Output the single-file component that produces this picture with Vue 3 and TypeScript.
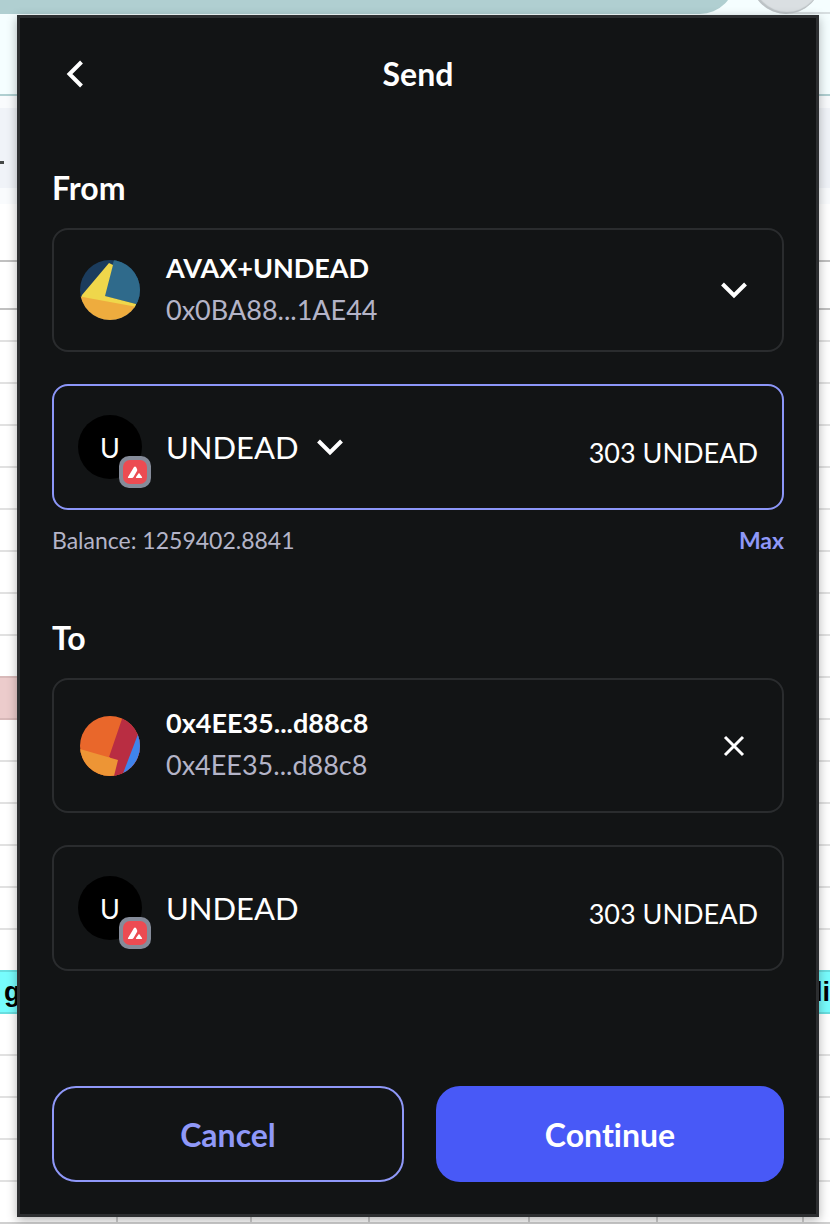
<script setup lang="ts">
import { ref } from 'vue'

interface SheetRow {
  id: number
  tone: 'plain' | 'pink' | 'cyan'
  left?: string
  right?: string
}

const rows: SheetRow[] = Array.from({ length: 21 }, (_, id) => {
  if (id === 8) return { id, tone: 'pink' }
  if (id === 15) return { id, tone: 'cyan', left: 'g', right: 'di' }
  return { id, tone: 'plain' }
})
const columns = ['a', 'b', 'c', 'd', 'e', 'f']

const account = { name: 'AVAX+UNDEAD', address: '0x0BA88...1AE44' }
const recipient = { name: '0x4EE35...d88c8', address: '0x4EE35...d88c8' }
const token = 'UNDEAD'
const balance = '1259402.8841'
const amount = ref('303 UNDEAD')

function useMax() {
  amount.value = `${balance} ${token}`
}
</script>

<template>
  <div class="screen">
    <div class="backdrop" aria-hidden="true">
      <div class="browser-bar">
        <div class="search-pill"></div>
        <div class="profile"></div>
      </div>
      <div class="toolbar"><div class="toolbar-band"><span class="dash"></span></div></div>
      <div class="formula"></div>
      <div class="heading-row"></div>
      <div class="first-row"></div>
      <div v-for="row in rows" :key="row.id" class="row" :class="row.tone">
        <span>{{ row.left }}</span><span>{{ row.right }}</span>
      </div>
      <div class="column-row"><span v-for="c in columns" :key="c" :class="'col-' + c"></span></div>
    </div>

    <main class="popup">
      <header class="header">
        <button class="icon-button back" type="button" aria-label="Back">
          <svg width="20" height="30" viewBox="0 0 20 30"><path d="M15.500 3 3.500 15 15.500 27" /></svg>
        </button>
        <h1>Send</h1>
      </header>

      <section class="from">
        <h2>From</h2>
        <button class="card account" type="button" aria-haspopup="listbox">
          <span class="slot">
            <svg width="60" height="60" viewBox="0 0 60 60" aria-hidden="true">
              <clipPath id="from-clip"><circle cx="30" cy="30" r="30" /></clipPath>
              <g clip-path="url(#from-clip)">
                <path fill="#1b3c5d" d="M0 0h60v60H0z" />
                <path fill="#2f6a8b" d="M34 0h26v46l-4-2-32-8z" />
                <path fill="#efd74b" d="M29 3 33 5 25 36 56 44V48L1 38 2 35z" />
                <path fill="#eeac3e" d="M0 36.500 60 47.500V60H0z" />
              </g>
            </svg>
          </span>
          <span class="names"><strong>{{ account.name }}</strong><span>{{ account.address }}</span></span>
          <svg class="end-icon" width="28" height="18" viewBox="0 0 28 18"><path d="M2.500 3 14 14.500 25.500 3" /></svg>
        </button>

        <div class="card token active">
          <span class="coin">U
            <svg class="badge" width="32" height="32" viewBox="0 0 32 32" aria-hidden="true">
              <rect width="32" height="32" rx="10" fill="#858b99" />
              <rect x="4" y="4" width="24" height="24" rx="7" fill="#ec4b52" />
              <path fill="#fff" d="M15 11q1-1 2 0l1 2q.5 1 0 2l-3.500 6q-.5 1-1.500 1H9.500q-1 0-.5-1zM19.500 17.500q.5-1 1 0l2.500 3.500q.5 1-.5 1h-5q-1 0-.5-1z" />
            </svg>
          </span>
          <button class="token-picker" type="button" aria-haspopup="listbox">
            {{ token }}
            <svg width="28" height="18" viewBox="0 0 28 18" aria-hidden="true"><path d="M2.500 3 14 14.500 25.500 3" /></svg>
          </button>
          <input v-model="amount" class="amount" type="text" aria-label="Amount to send" />
        </div>

        <div class="balance">
          <span>Balance: {{ balance }}</span>
          <button type="button" @click="useMax">Max</button>
        </div>
      </section>

      <section class="to">
        <h2>To</h2>
        <div class="card recipient">
          <span class="slot">
            <svg width="60" height="60" viewBox="0 0 60 60" aria-hidden="true">
              <clipPath id="to-clip"><circle cx="30" cy="30" r="30" /></clipPath>
              <g clip-path="url(#to-clip)">
                <path fill="#e9672b" d="M0 0h60v60H0z" />
                <path fill="#b92d42" d="M43 0h17v60H30V41h-1z" />
                <path fill="#3f84ec" d="M60 13V60H42z" />
                <path fill="#ed9535" d="M0 33 38 44 34 60H0z" />
              </g>
            </svg>
          </span>
          <span class="names"><strong>{{ recipient.name }}</strong><span>{{ recipient.address }}</span></span>
          <button class="icon-button clear end-icon" type="button" aria-label="Clear recipient">
            <svg width="28" height="28" viewBox="0 0 28 28"><path d="M5 5 23 23M23 5 5 23" /></svg>
          </button>
        </div>

        <div class="card token">
          <span class="coin">U
            <svg class="badge" width="32" height="32" viewBox="0 0 32 32" aria-hidden="true">
              <rect width="32" height="32" rx="10" fill="#858b99" />
              <rect x="4" y="4" width="24" height="24" rx="7" fill="#ec4b52" />
              <path fill="#fff" d="M15 11q1-1 2 0l1 2q.5 1 0 2l-3.500 6q-.5 1-1.500 1H9.500q-1 0-.5-1zM19.500 17.500q.5-1 1 0l2.500 3.500q.5 1-.5 1h-5q-1 0-.5-1z" />
            </svg>
          </span>
          <span class="token-name">{{ token }}</span>
          <output class="amount">{{ amount }}</output>
        </div>
      </section>

      <footer class="actions">
        <button class="cancel" type="button">Cancel</button>
        <button class="continue" type="button">Continue</button>
      </footer>
    </main>
  </div>
</template>

<style>
body {
  margin: 0;
  background: #fff;
}
</style>

<style scoped>
* {
  box-sizing: border-box;
}
.screen {
  display: grid;
  grid-template-columns: minmax(0, 1fr);
  min-height: 100vh;
  overflow: hidden;
  font-family: Lato, "Open Sans", sans-serif;
  font-variant-ligatures: none;
}
.backdrop,
.popup {
  grid-area: 1 / 1;
}
.backdrop {
  overflow: hidden;
}

.browser-bar {
  display: flex;
  gap: 16px;
  height: 96px;
  padding-right: 9px;
  background: linear-gradient(#d7dee0, #d7dee0) right 12px / 40px 2px no-repeat #f5feff;
  border-bottom: 2px solid #b0cfd1;
}
.search-pill {
  flex: 1;
  height: 70px;
  margin-top: -56px;
  background: #b0cfd1;
  border-radius: 0 35px 35px 0;
}
.profile {
  width: 70px;
  height: 70px;
  margin-top: -56px;
  border-radius: 50%;
  background: #dadfe2;
  box-shadow: inset 1px -1px 1px 1px #bcc2c5;
}
.toolbar {
  height: 108px;
  padding: 12px 0 16px;
  background: #f9fbfd;
}
.toolbar-band {
  display: flex;
  align-items: center;
  height: 80px;
  padding-top: 29px;
  background: #f0f3f8;
}
.dash {
  width: 4px;
  height: 3px;
  background: #444746;
}
.formula {
  height: 58px;
  border-bottom: 2px solid #c0c0c0;
}
.heading-row {
  height: 48px;
  border-bottom: 2px solid #c0c0c0;
}
.first-row {
  height: 32px;
  border-bottom: 2px solid #e1e1e1;
}
.row {
  display: flex;
  align-items: center;
  justify-content: space-between;
  height: 42px;
  padding-left: 4px;
  border-bottom: 2px solid #e1e1e1;
  font: 700 27px/40px "Liberation Sans", Arial, sans-serif;
  color: #000;
}
.row.pink {
  background: linear-gradient(90deg, #eccccc 50%, #fff 50%);
  border-image: linear-gradient(90deg, #d8b9b9 50%, #e1e1e1 50%) 2;
}
.row:has(+ .pink) {
  border-image: linear-gradient(90deg, #d8b9b9 50%, #e1e1e1 50%) 2;
}
.row.cyan {
  background: #77fcfd;
  border-color: #68dedf;
  box-shadow: 0 -2px #68dedf;
}
.row:nth-last-child(2) {
  border-color: #d0d0d0;
}
.column-row {
  display: flex;
  height: 20px;
  margin-top: -22px;
}
.column-row span {
  border-right: 2px solid #d0d0d0;
}
.col-a { width: 118px; }
.col-b { width: 134px; }
.col-c { width: 118px; }
.col-d { width: 160px; }
.col-e { width: 128px; }
.col-f { width: 146px; }

.popup {
  z-index: 1;
  display: flex;
  flex-direction: column;
  margin: 15px 11px 7px 17px;
  padding: 0 32px 32px;
  background: #121415;
  border: 3px solid #2c2e30;
  box-shadow: 0 3px 10px rgba(0, 0, 0, 0.3);
  color: #fff;
}
button {
  padding: 0;
  border: 0;
  background: none;
  color: inherit;
  font: inherit;
  text-align: left;
  cursor: pointer;
}
svg {
  display: block;
  flex: none;
}
button svg {
  fill: none;
  stroke: #fff;
  stroke-width: 4;
}
.clear svg {
  stroke-width: 3;
}
.slot svg {
  stroke: none;
}
.header {
  display: grid;
  grid-template-columns: 48px 1fr 48px;
  align-items: center;
  height: 112px;
}
.icon-button {
  display: grid;
  place-items: center;
}
.back {
  width: 48px;
  height: 48px;
}
h1,
h2 {
  margin: 0;
  font-weight: 700;
  line-height: 40px;
}
h1 {
  font-size: 32px;
  text-align: center;
}
h2 {
  margin-bottom: 20px;
  font-size: 32px;
}
.from {
  margin-top: 38px;
}
.to {
  margin-top: 58px;
}
.card {
  display: flex;
  align-items: center;
  gap: 24px;
  width: 100%;
  padding: 0 24px;
  border: 2px solid #2a2c2e;
  border-radius: 16px;
}
.account {
  height: 124px;
}
.token {
  height: 126px;
  margin-top: 32px;
}
.active {
  border-color: #8c96f8;
}
.recipient {
  height: 135px;
}
.slot {
  display: grid;
  place-items: center;
  flex: none;
  width: 64px;
}
.names {
  display: flex;
  flex: 1;
  flex-direction: column;
  min-width: 0;
  padding-bottom: 3px;
  font-size: 27px;
  line-height: 42px;
  color: #b4b4c8;
}
.names strong {
  font-weight: 700;
  color: #fff;
}
.end-icon {
  margin-right: 10px;
}
.coin {
  position: relative;
  display: grid;
  place-items: center;
  flex: none;
  width: 64px;
  height: 64px;
  border-radius: 50%;
  background: #000;
  font-size: 27px;
}
.badge {
  position: absolute;
  right: -9px;
  bottom: -9px;
}
.token-picker,
.token-name {
  display: flex;
  align-items: center;
  gap: 17px;
  font-size: 31px;
  line-height: 40px;
}
.amount {
  flex: 1;
  min-width: 0;
  width: 0;
  padding: 12px 0 0;
  border: 0;
  outline: 0;
  background: none;
  color: #fff;
  font: inherit;
  font-size: 27px;
  line-height: 40px;
  text-align: right;
}
.balance {
  display: flex;
  justify-content: space-between;
  margin-top: 10px;
  font-size: 23px;
  line-height: 40px;
  color: #b4b4c8;
}
.balance button {
  color: #8f98f8;
  font-weight: 700;
}
.actions {
  display: grid;
  grid-template-columns: minmax(0, 352fr) minmax(0, 348fr);
  gap: 32px;
  margin-top: auto;
  padding-top: 32px;
}
.actions button {
  height: 96px;
  border-radius: 24px;
  font-size: 32px;
  font-weight: 700;
  text-align: center;
}
.cancel {
  border: 2px solid #8f98f8;
  color: #8f98f8;
}
.continue {
  background: #4859f7;
}
</style>
